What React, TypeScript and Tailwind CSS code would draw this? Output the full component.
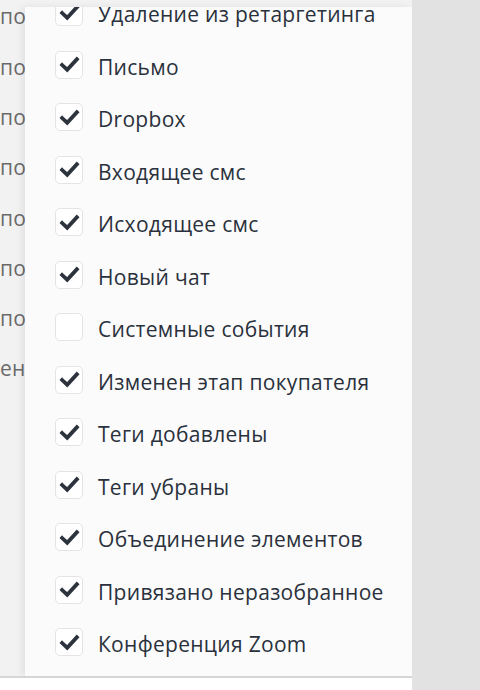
import React from "react";

const items: { label: string; checked: boolean }[] = [
  { label: "Удаление из ретаргетинга", checked: true },
  { label: "Письмо", checked: true },
  { label: "Dropbox", checked: true },
  { label: "Входящее смс", checked: true },
  { label: "Исходящее смс", checked: true },
  { label: "Новый чат", checked: true },
  { label: "Системные события", checked: false },
  { label: "Изменен этап покупателя", checked: true },
  { label: "Теги добавлены", checked: true },
  { label: "Теги убраны", checked: true },
  { label: "Объединение элементов", checked: true },
  { label: "Привязано неразобранное", checked: true },
  { label: "Конференция Zoom", checked: true },
];

const leftRows = ["поле", "поле", "поле", "поле", "поле", "поле", "поле", "енение"];

function Check() {
  return (
    <svg width="21" height="21" viewBox="0 0 20 20" fill="none">
      <path
        d="M3 10.5 L7.8 15 L17 5"
        stroke="#2c333d"
        strokeWidth="3.6"
        strokeLinecap="square"
        strokeLinejoin="miter"
      />
    </svg>
  );
}

export default function App() {
  return (
    <div
      className="flex w-[480px] h-[690px] overflow-hidden bg-[#e2e2e2]"
      style={{ fontFamily: '"Open Sans", "Noto Sans", sans-serif' }}
    >
      <div className="flex flex-col w-[412px] h-full">
        <div className="relative flex-1 bg-[#f2f2f2] overflow-hidden">
          <div className="flex flex-col mt-[-8px] text-[21px] tracking-[0.3px] text-[#6a6a6a]">
            {leftRows.map((t, i) => (
              <div key={i} className="h-[50.3px] flex items-center whitespace-nowrap">
                {t}
              </div>
            ))}
          </div>
          <div className="absolute left-[25px] top-[7px] right-0 bottom-0 bg-[#fbfbfb] shadow-[-3px_0_7px_rgba(0,0,0,0.07)] overflow-hidden">
            <div className="flex flex-col mt-[-21.25px] pl-[30px]">
              {items.map((it, i) => (
                <div key={i} className="h-[52.5px] flex items-center gap-[15px] shrink-0">
                  <div className="w-[28px] h-[28px] rounded-[5px] border border-[#e4e4e4] bg-white flex items-center justify-center">
                    {it.checked && <Check />}
                  </div>
                  <span className="text-[21px] tracking-[0.3px] leading-none text-[#2a313c] whitespace-nowrap pt-[5px]">
                    {it.label}
                  </span>
                </div>
              ))}
            </div>
          </div>
        </div>
        <div className="h-[14px] bg-white border-t-2 border-[#d6d6d6]" />
      </div>
    </div>
  );
}
